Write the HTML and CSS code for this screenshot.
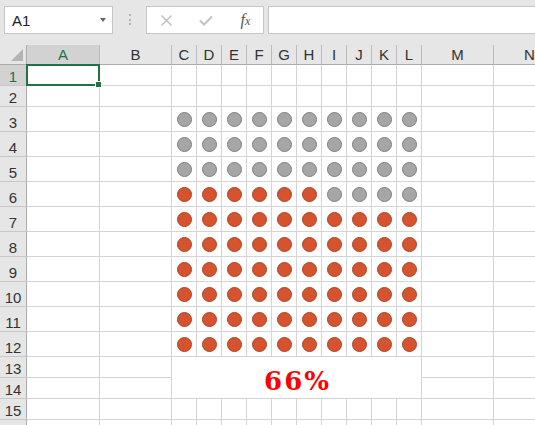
FILE: index.html
```html
<!DOCTYPE html>
<html>
<head>
<meta charset="utf-8">
<link rel="stylesheet" href="styles.css">
</head>
<body>
<div class="app">
  <div class="toolbar">
    <div class="namebox"><span>A1</span><span class="caret"></span></div>
    <div class="grip"><i></i><i></i><i></i></div>
    <div class="fxbox">
      <span class="btn"><svg width="11" height="11" viewBox="0 0 11 11"><path d="M0.5 0.5 L10.5 10.5 M10.5 0.5 L0.5 10.5" stroke="#bcbcbc" stroke-width="1.3" fill="none"/></svg></span>
      <span class="btn"><svg width="14" height="11" viewBox="0 0 14 11"><path d="M1 5.5 L5 9.5 L13 1.5" stroke="#c2c2c2" stroke-width="2" fill="none"/></svg></span>
      <span class="btn fx">f<span class="fxx">x</span></span>
    </div>
    <div class="formula"></div>
  </div>

  <div class="sheet">
    <div class="corner"></div>
    <div class="ch sel">A</div><div class="ch">B</div><div class="ch">C</div><div class="ch">D</div><div class="ch">E</div><div class="ch">F</div><div class="ch">G</div><div class="ch">H</div><div class="ch">I</div><div class="ch">J</div><div class="ch">K</div><div class="ch">L</div><div class="ch">M</div><div class="ch">N</div>

    <div class="rh sel">1</div>
    <div class="c active"></div><div class="c"></div><div class="c"></div><div class="c"></div><div class="c"></div><div class="c"></div><div class="c"></div><div class="c"></div><div class="c"></div><div class="c"></div><div class="c"></div><div class="c"></div><div class="c"></div><div class="c"></div>

    <div class="rh">2</div>
    <div class="c"></div><div class="c"></div><div class="c"></div><div class="c"></div><div class="c"></div><div class="c"></div><div class="c"></div><div class="c"></div><div class="c"></div><div class="c"></div><div class="c"></div><div class="c"></div><div class="c"></div><div class="c"></div>

    <div class="rh">3</div>
    <div class="c"></div><div class="c"></div>
    <div class="c"><span class="dot g"></span></div><div class="c"><span class="dot g"></span></div><div class="c"><span class="dot g"></span></div><div class="c"><span class="dot g"></span></div><div class="c"><span class="dot g"></span></div><div class="c"><span class="dot g"></span></div><div class="c"><span class="dot g"></span></div><div class="c"><span class="dot g"></span></div><div class="c"><span class="dot g"></span></div><div class="c"><span class="dot g"></span></div>
    <div class="c"></div><div class="c"></div>

    <div class="rh">4</div>
    <div class="c"></div><div class="c"></div>
    <div class="c"><span class="dot g"></span></div><div class="c"><span class="dot g"></span></div><div class="c"><span class="dot g"></span></div><div class="c"><span class="dot g"></span></div><div class="c"><span class="dot g"></span></div><div class="c"><span class="dot g"></span></div><div class="c"><span class="dot g"></span></div><div class="c"><span class="dot g"></span></div><div class="c"><span class="dot g"></span></div><div class="c"><span class="dot g"></span></div>
    <div class="c"></div><div class="c"></div>

    <div class="rh">5</div>
    <div class="c"></div><div class="c"></div>
    <div class="c"><span class="dot g"></span></div><div class="c"><span class="dot g"></span></div><div class="c"><span class="dot g"></span></div><div class="c"><span class="dot g"></span></div><div class="c"><span class="dot g"></span></div><div class="c"><span class="dot g"></span></div><div class="c"><span class="dot g"></span></div><div class="c"><span class="dot g"></span></div><div class="c"><span class="dot g"></span></div><div class="c"><span class="dot g"></span></div>
    <div class="c"></div><div class="c"></div>

    <div class="rh">6</div>
    <div class="c"></div><div class="c"></div>
    <div class="c"><span class="dot o"></span></div><div class="c"><span class="dot o"></span></div><div class="c"><span class="dot o"></span></div><div class="c"><span class="dot o"></span></div><div class="c"><span class="dot o"></span></div><div class="c"><span class="dot o"></span></div><div class="c"><span class="dot g"></span></div><div class="c"><span class="dot g"></span></div><div class="c"><span class="dot g"></span></div><div class="c"><span class="dot g"></span></div>
    <div class="c"></div><div class="c"></div>

    <div class="rh">7</div>
    <div class="c"></div><div class="c"></div>
    <div class="c"><span class="dot o"></span></div><div class="c"><span class="dot o"></span></div><div class="c"><span class="dot o"></span></div><div class="c"><span class="dot o"></span></div><div class="c"><span class="dot o"></span></div><div class="c"><span class="dot o"></span></div><div class="c"><span class="dot o"></span></div><div class="c"><span class="dot o"></span></div><div class="c"><span class="dot o"></span></div><div class="c"><span class="dot o"></span></div>
    <div class="c"></div><div class="c"></div>

    <div class="rh">8</div>
    <div class="c"></div><div class="c"></div>
    <div class="c"><span class="dot o"></span></div><div class="c"><span class="dot o"></span></div><div class="c"><span class="dot o"></span></div><div class="c"><span class="dot o"></span></div><div class="c"><span class="dot o"></span></div><div class="c"><span class="dot o"></span></div><div class="c"><span class="dot o"></span></div><div class="c"><span class="dot o"></span></div><div class="c"><span class="dot o"></span></div><div class="c"><span class="dot o"></span></div>
    <div class="c"></div><div class="c"></div>

    <div class="rh">9</div>
    <div class="c"></div><div class="c"></div>
    <div class="c"><span class="dot o"></span></div><div class="c"><span class="dot o"></span></div><div class="c"><span class="dot o"></span></div><div class="c"><span class="dot o"></span></div><div class="c"><span class="dot o"></span></div><div class="c"><span class="dot o"></span></div><div class="c"><span class="dot o"></span></div><div class="c"><span class="dot o"></span></div><div class="c"><span class="dot o"></span></div><div class="c"><span class="dot o"></span></div>
    <div class="c"></div><div class="c"></div>

    <div class="rh">10</div>
    <div class="c"></div><div class="c"></div>
    <div class="c"><span class="dot o"></span></div><div class="c"><span class="dot o"></span></div><div class="c"><span class="dot o"></span></div><div class="c"><span class="dot o"></span></div><div class="c"><span class="dot o"></span></div><div class="c"><span class="dot o"></span></div><div class="c"><span class="dot o"></span></div><div class="c"><span class="dot o"></span></div><div class="c"><span class="dot o"></span></div><div class="c"><span class="dot o"></span></div>
    <div class="c"></div><div class="c"></div>

    <div class="rh">11</div>
    <div class="c"></div><div class="c"></div>
    <div class="c"><span class="dot o"></span></div><div class="c"><span class="dot o"></span></div><div class="c"><span class="dot o"></span></div><div class="c"><span class="dot o"></span></div><div class="c"><span class="dot o"></span></div><div class="c"><span class="dot o"></span></div><div class="c"><span class="dot o"></span></div><div class="c"><span class="dot o"></span></div><div class="c"><span class="dot o"></span></div><div class="c"><span class="dot o"></span></div>
    <div class="c"></div><div class="c"></div>

    <div class="rh">12</div>
    <div class="c"></div><div class="c"></div>
    <div class="c"><span class="dot o"></span></div><div class="c"><span class="dot o"></span></div><div class="c"><span class="dot o"></span></div><div class="c"><span class="dot o"></span></div><div class="c"><span class="dot o"></span></div><div class="c"><span class="dot o"></span></div><div class="c"><span class="dot o"></span></div><div class="c"><span class="dot o"></span></div><div class="c"><span class="dot o"></span></div><div class="c"><span class="dot o"></span></div>
    <div class="c"></div><div class="c"></div>

    <div class="rh">13</div>
    <div class="c"></div><div class="c"></div>
    <div class="c pct">66%</div>
    <div class="c"></div><div class="c"></div>

    <div class="rh">14</div>
    <div class="c"></div><div class="c"></div>
    <div class="c"></div><div class="c"></div>

    <div class="rh">15</div>
    <div class="c"></div><div class="c"></div><div class="c"></div><div class="c"></div><div class="c"></div><div class="c"></div><div class="c"></div><div class="c"></div><div class="c"></div><div class="c"></div><div class="c"></div><div class="c"></div><div class="c"></div><div class="c"></div>

    <div class="rh"></div>
    <div class="c"></div><div class="c"></div><div class="c"></div><div class="c"></div><div class="c"></div><div class="c"></div><div class="c"></div><div class="c"></div><div class="c"></div><div class="c"></div><div class="c"></div><div class="c"></div><div class="c"></div><div class="c"></div>
  </div>
</div>
</body>
</html>
```
FILE: styles.css
```css
html, body {
  margin: 0;
  padding: 0;
  background: #ffffff;
}
body {
  font-family: "Liberation Sans", Arial, sans-serif;
  color: #333;
}
.app {
  width: 535px;
  height: 425px;
  overflow: hidden;
}

/* formula bar */
.toolbar {
  height: 45px;
  box-sizing: border-box;
  background: #e6e6e6;
  display: flex;
  align-items: flex-start;
  padding: 6px 0 0 4px;
}
.namebox {
  width: 109px;
  height: 28px;
  box-sizing: border-box;
  border: 1px solid #c6c6c6;
  background: #fff;
  display: flex;
  align-items: center;
  justify-content: space-between;
  padding: 0 6px 0 7px;
  font-size: 15px;
  color: #222;
}
.caret {
  width: 0;
  height: 0;
  border-left: 3.5px solid transparent;
  border-right: 3.5px solid transparent;
  border-top: 4px solid #666;
}
.grip {
  width: 33px;
  display: flex;
  flex-direction: column;
  align-items: center;
  gap: 2.5px;
  padding-top: 8px;
}
.grip i {
  display: block;
  width: 2px;
  height: 2px;
  background: #b2b2b2;
}
.fxbox {
  width: 118px;
  height: 28px;
  box-sizing: border-box;
  border: 1px solid #c6c6c6;
  background: #fff;
  display: flex;
  align-items: center;
}
.btn {
  width: 40px;
  display: flex;
  justify-content: center;
  align-items: center;
}
.btn svg { display: block; }
.fx {
  width: 36px;
  font-family: "Liberation Serif", "Times New Roman", serif;
  font-style: italic;
  font-size: 16px;
  color: #555;
  padding-left: 2px;
}
.fxx {
  font-size: 12px;
  position: relative;
  top: 1px;
}
.formula {
  flex: 1;
  height: 28px;
  box-sizing: border-box;
  margin-left: 4px;
  margin-right: -10px;
  border: 1px solid #c6c6c6;
  background: #fff;
}

/* sheet */
.sheet {
  display: grid;
  grid-template-columns: 27px 73px 72px repeat(10, 25px) 72px 72px;
  grid-template-rows: 20px 21px 21px repeat(10, 25px) repeat(4, 21px);
}
.sheet > div {
  box-sizing: border-box;
  min-width: 0;
}
.c {
  border-right: 1px solid #d4d4d4;
  border-bottom: 1px solid #d4d4d4;
  display: flex;
  align-items: center;
  justify-content: center;
}
.corner {
  background: #e6e6e6;
  border-right: 1px solid #ababab;
  border-bottom: 1px solid #ababab;
  position: relative;
}
.corner::after {
  content: "";
  position: absolute;
  right: 3px;
  bottom: 3px;
  width: 0;
  height: 0;
  border-left: 12px solid transparent;
  border-bottom: 12px solid #b4b4b4;
}
.ch {
  background: #e6e6e6;
  border-right: 1px solid #bcbcbc;
  border-bottom: 1px solid #ababab;
  display: flex;
  align-items: center;
  justify-content: center;
  font-size: 15px;
  color: #333;
}
.rh {
  background: #e6e6e6;
  border-right: 1px solid #ababab;
  border-bottom: 1px solid #c8c8c8;
  display: flex;
  align-items: flex-end;
  justify-content: center;
  font-size: 15px;
  line-height: 17px;
  color: #333;
}
.sel {
  background: #d2d2d2;
  color: #217346;
}
.active {
  position: relative;
}
.active::before {
  content: "";
  position: absolute;
  top: -1px;
  left: -1px;
  right: -1px;
  bottom: -1px;
  border: 2px solid #217346;
}
.active::after {
  content: "";
  position: absolute;
  right: -3px;
  bottom: -3px;
  width: 5px;
  height: 5px;
  background: #217346;
  border: 1px solid #fff;
}

/* dots */
.dot {
  display: block;
  width: 15px;
  height: 15px;
  box-sizing: border-box;
  border-radius: 50%;
}
.g {
  background: #a6a6a6;
  border: 1.5px solid #7f7f7f;
}
.o {
  background: #d6532f;
  border: 1px solid #ad4227;
}

/* merged result cell */
.pct {
  grid-column: 4 / 14;
  grid-row: 14 / 16;
  font-family: "DejaVu Serif", "Liberation Serif", serif;
  font-weight: bold;
  font-size: 26px;
  letter-spacing: 2px;
  color: #ff0000;
  padding-top: 6px;
  padding-left: 2px;
}
```
